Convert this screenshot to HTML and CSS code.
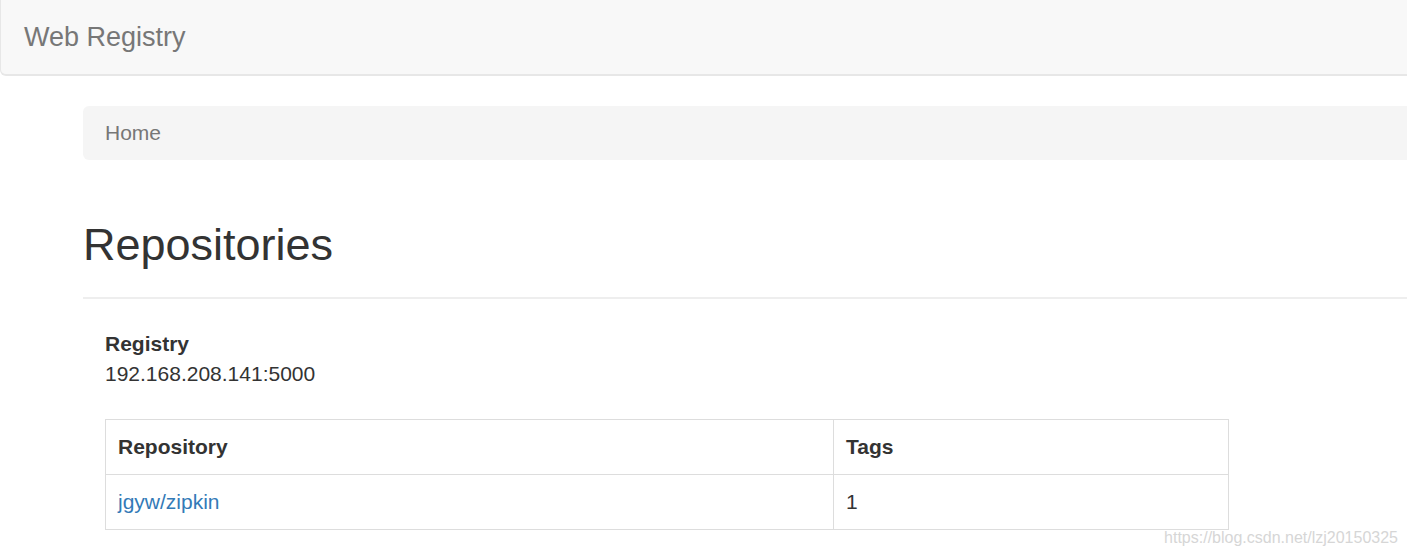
FILE: index.html
```html
<!DOCTYPE html>
<html lang="en">
<head>
    <meta charset="UTF-8">
    <meta name="viewport" content="width=device-width, initial-scale=1.0">
    <title>Web Registry</title>
    <link rel="stylesheet" href="styles.css">
</head>
<body>
    <nav class="navbar">
        <a class="navbar-brand" href="#">Web Registry</a>
    </nav>

    <div class="container">
        <ol class="breadcrumb">
            <li class="active">Home</li>
        </ol>

        <div class="page-header">
            <h1>Repositories</h1>
        </div>

        <div class="content">
            <dl class="registry">
                <dt>Registry</dt>
                <dd>192.168.208.141:5000</dd>
            </dl>

            <table class="table">
                <thead>
                    <tr>
                        <th class="col-repo">Repository</th>
                        <th>Tags</th>
                    </tr>
                </thead>
                <tbody>
                    <tr>
                        <td><a href="#">jgyw/zipkin</a></td>
                        <td>1</td>
                    </tr>
                </tbody>
            </table>
        </div>
    </div>

    <div class="watermark">https://blog.csdn.net/lzj20150325</div>
</body>
</html>
```

FILE: styles.css
```css
body {
    font-family: "Liberation Sans", Arial, sans-serif;
    font-size: 21px;
    line-height: 30px;
    color: #333;
    background-color: #fff;
    margin: 0;
    padding: 0;
    overflow: hidden;
}
a {
    color: #337ab7;
    text-decoration: none;
}
.navbar {
    height: 74px;
    background-color: #f8f8f8;
    border: 1px solid #e7e7e7;
    border-top: none;
    border-right: none;
    border-bottom-width: 2px;
    border-radius: 0 0 0 6px;
    margin-bottom: 30px;
    display: flex;
    align-items: center;
}
.navbar-brand {
    color: #777;
    font-size: 27px;
    line-height: 30px;
    padding: 0 23px;
    margin-top: 0;
}
.container {
    margin-left: 83px;
}
.breadcrumb {
    list-style: none;
    margin: 0 0 30px;
    padding: 12px 22px;
    background-color: #f5f5f5;
    border-radius: 6px 0 0 6px;
}
.breadcrumb .active {
    color: #777;
}
.page-header {
    margin: 60px 0 30px;
    padding-bottom: 12px;
    border-bottom: 2px solid #eee;
}
.page-header h1 {
    font-size: 45px;
    font-weight: normal;
    line-height: 1.1;
    margin: 30px 0 15px;
}
.content {
    margin-left: 22px;
}
.registry {
    margin: 0 0 30px;
}
.registry dt {
    font-weight: bold;
}
.registry dd {
    margin: 0;
}
.table {
    width: 1124px;
    border-collapse: collapse;
    border: 1px solid #ddd;
}
.table th,
.table td {
    text-align: left;
    padding: 12px;
    border: 1px solid #ddd;
    line-height: 30px;
}
.table th {
    font-weight: bold;
}
.col-repo {
    width: 703px;
}
.watermark {
    position: absolute;
    right: 9px;
    top: 526px;
    font-size: 16px;
    line-height: 24px;
    color: #d6d6d6;
}
```
